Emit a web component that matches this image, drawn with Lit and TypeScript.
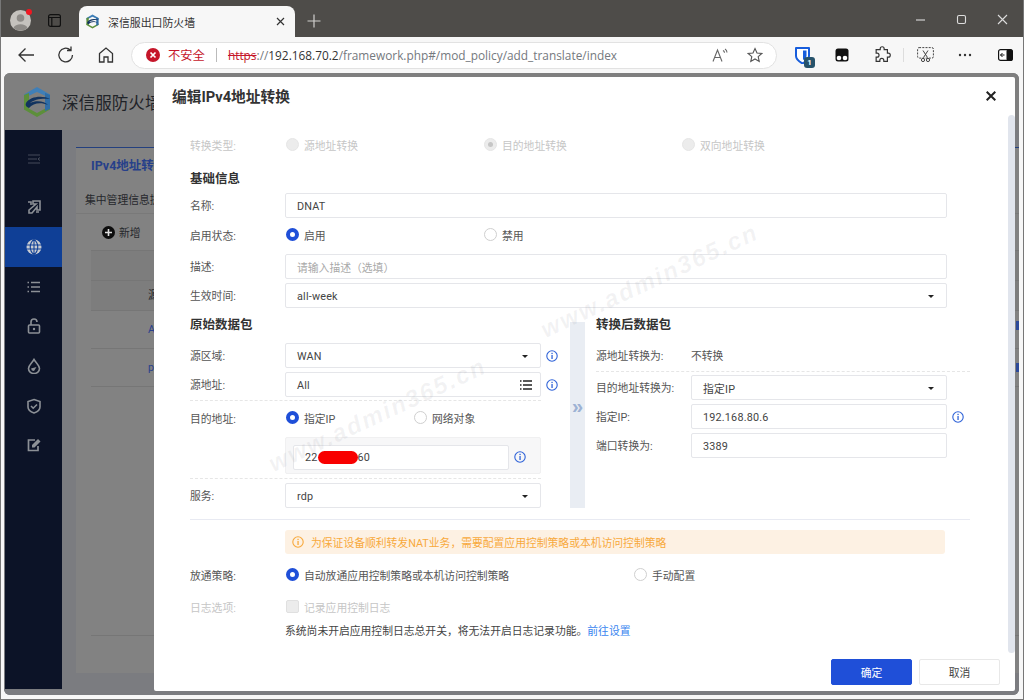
import { LitElement, html, svg, css } from "lit";
import { customElement } from "lit/decorators.js";

const COMMA = "\uFF0C";
const LP = "\uFF08";
const RP = "\uFF09";

const logo = (s: number) => html`<svg width=${s} height=${s} viewBox="0 0 32 32">
  <path d="M16 1 L29 8.500 V12 L16 6 L3 12 V8.500 Z" fill="#3f7fb8"/>
  <path d="M3 20 L16 27 L29 20 V23.500 L16 31 L3 23.500 Z" fill="#5c8f3a"/>
  <path d="M3 9 L8 7 V24 L3 23 Z" fill="#5c8f3a"/>
  <path d="M29 9 L24 7 V25 L29 23 Z" fill="#2f6da6"/>
  <path d="M5 17 C9 10 22 9 29 13 C22 12 13 13 9 17 C15 14 24 15 27 19 C20 16 12 17 8 22 C5 21 4 19 5 17 Z" fill="#12335f"/>
</svg>`;

const info = (c = "#2f63d8") => html`<svg class="info" width="12" height="12" viewBox="0 0 12 12">
  <circle cx="6" cy="6" r="5.200" fill="none" stroke=${c} stroke-width="1.100"/>
  <rect x="5.400" y="5" width="1.300" height="4" fill=${c}/><rect x="5.400" y="2.800" width="1.300" height="1.300" fill=${c}/>
</svg>`;

const tb = (inner: unknown, w = 20, h = 20) => html`<svg width=${w} height=${h} viewBox="0 0 20 20" fill="none" stroke="#333" stroke-width="1.300">${inner}</svg>`;

const sideIcons = [
  svg`<path d="M2 4h12M2 8h9M2 12h12M14 6.500l-2 1.500 2 1.500" stroke-width="1" opacity=".45"/>`,
  svg`<path d="M13 2H7v3h3L3 11v3h3l5-6v3h3V2zM2 3h3v3M10 13h3" stroke-width="1.600"/>`,
  null,
  svg`<path d="M5 3.500h9M5 8h9M5 12.500h9M1.500 3.500h1.500M1.500 8h1.500M1.500 12.500h1.500" stroke-width="1.500"/>`,
  svg`<rect x="2.500" y="7" width="11" height="8" rx="1" stroke-width="1.600"/><path d="M5 7V4a3 3 0 0 1 6 0" stroke-width="1.600"/><circle cx="8" cy="11" r="1.200" fill="#8c9096" stroke="none"/>`,
  svg`<path d="M8 1.500 C10 5 13.500 7 13.500 10.500 A5.500 5 0 0 1 2.500 10.500 C2.500 7 6 5 8 1.500Z" stroke-width="1.600"/><path d="M5 10.500 A3 3 0 0 0 8 13 L10.500 9 Z" fill="#8c9096" stroke="none"/>`,
  svg`<path d="M8 1.500 L14 3.500 V9 C14 12 11 14 8 15 C5 14 2 12 2 9 V3.500 Z" stroke-width="1.600"/><path d="M5 8l2.200 2.200L11 6.500" stroke-width="1.600"/>`,
  svg`<path d="M12 9v4.500H2.500V3H9" stroke-width="1.700"/><path d="M6 10.500V8l6-6 2.500 2.500-6 6z" fill="#8c9096" stroke="none"/>`,
];

@customElement("app-root")
export class AppRoot extends LitElement {
  static styles = css`
    :host { display: block; width: 1024px; height: 700px; overflow: hidden; font-family: Roboto, "Noto Sans CJK SC", sans-serif; font-size: 10.8px; color: #555; }
    .win { height: 700px; box-sizing: border-box; display: flex; flex-direction: column; background: #f7f7f7; border-left: 1px solid #777; border-right: 1px solid #777; border-bottom: 1px solid #777; }

    .tabs { height: 37px; flex: none; background: #4e4c49; display: flex; align-items: flex-end; }
    .avatar { width: 21px; height: 21px; margin: 0 0 6px 9px; position: relative; flex: none; }
    .dot { position: absolute; right: -1px; top: -1px; width: 6px; height: 6px; border-radius: 50%; background: #f01822; }
    .tabact { width: 13px; height: 13px; margin: 0 0 10px 17px; flex: none; display: flex; }
    .tab { width: 216px; height: 31px; margin-left: 18px; flex: none; background: #f7f7f7; border-radius: 8px 8px 0 0; display: flex; align-items: center; box-sizing: border-box; padding: 0 10px 0 6px; color: #333; font-size: 10.9px; }
    .tab .fav { margin-right: 8px; display: flex; }
    .tab .t { flex: 1; }
    .plus { margin: 0 0 9px 12px; display: flex; }
    .spacer { flex: 1; }
    .wc { display: flex; margin-bottom: 12px; padding-right: 15px; gap: 30px; }
    .wc svg { display: block; }

    .tool { height: 36px; flex: none; display: flex; align-items: center; padding-left: 5px; }
    .btn { width: 40px; height: 30px; display: flex; align-items: center; justify-content: center; flex: none; }
    .addr { margin-left: 5px; width: 646px; height: 27px; box-sizing: border-box; background: #fff; border: 1px solid #e2e2e2; border-radius: 14px; display: flex; align-items: center; padding: 0 13px 0 14px; font-size: 11.85px; color: #75797e; flex: none; font-family: "Open Sans", "Noto Sans CJK SC", sans-serif; }
    .addr .err { display: flex; margin-right: 8px; }
    .addr .bad { color: #c5162a; font-size: 12.300px; font-family: "Noto Sans CJK SC", sans-serif; }
    .addr .sep { width: 1px; height: 14px; background: #bbb; margin: 0 11px; }
    .addr s { color: #c5162a; text-decoration-thickness: 1px; }
    .addr b { font-weight: 400; color: #333; }
    .addr .url { flex: 1; white-space: nowrap; }
    .addr .ic { display: flex; margin-left: 19px; }
    .ext { margin-left: 5px; }
    .vsep { width: 1px; height: 14px; background: #ddd; margin: 0 1px; flex: none; }
    .b1 { position: relative; }
    .badge { position: absolute; left: 22px; top: 17px; width: 11px; height: 11px; border-radius: 3px; background: #27536b; color: #fff; font-size: 8px; line-height: 11px; text-align: center; font-weight: 700; }

    .content { flex: 1; padding: 0 4px 4px 3px; display: flex; min-height: 0; }
    .frame { position: relative; flex: 1; background: #7b7c80; border-radius: 6px; overflow: hidden; display: flex; flex-direction: column; }

    .phead { height: 57px; flex: none; background: #7f7f7f; display: flex; align-items: center; padding-left: 17px; gap: 9px; font-size: 16.600px; color: #1f2328; }
    .pbody { flex: 1; display: flex; min-height: 0; padding: 0 0 6px 1px; background: #7b7c80; }
    .side { width: 57px; flex: none; background: #0c1327; box-sizing: border-box; display: flex; flex-direction: column; }
    .si { height: 39.700px; display: flex; align-items: center; justify-content: center; flex: none; }
    .si.top { height: 57px; }
    .si.active { background: #0f3f96; height: 40px; }
    .pmain { flex: 1; padding: 17px 0 0 14px; min-width: 0; display: flex; }
    .panel { flex: 1; background: #828282; border-top: 1px solid #24407f; box-sizing: border-box; height: 526px; color: #26282c; white-space: nowrap; }
    .ptitle { height: 35px; line-height: 35px; padding-left: 15px; font-weight: 700; font-size: 12.500px; color: #27408a; }
    .pinfo { height: 30px; line-height: 36px; padding-left: 9px; border-bottom: 1px solid #797979; }
    .padd { height: 36px; display: flex; align-items: center; padding-left: 26px; gap: 4px; }
    .ptable { margin-left: 15px; border-top: 1px solid #767676; }
    .ptable div { border-bottom: 1px solid #767676; box-sizing: border-box; padding-left: 57px; }
    .r1 { height: 30px; background: #7d7d7d; }
    .r2 { height: 30px; line-height: 30px; background: #7d7d7d; }
    .r3, .r4 { height: 38px; line-height: 38px; color: #29408c; }
    .ptable .gap { height: 249px; }

    .modal { position: absolute; left: 150px; top: 4px; width: 861px; height: 614px; background: #fff; border-radius: 2px; display: flex; flex-direction: column; }
    .mhead { height: 38px; box-sizing: border-box; flex: none; display: flex; align-items: center; justify-content: space-between; padding: 0 19px 2px 18px; font-size: 14.700px; font-weight: 700; color: #333; }
    .close { display: flex; padding-top: 2px; }
    .bar { position: absolute; left: 854px; top: 38px; width: 7px; height: 538px; background: #e1e5ed; border-radius: 4px; }
    .mbody { flex: 1; padding: 18px 0 0 36px; min-height: 0; }
    .row { display: flex; align-items: center; height: 25px; white-space: nowrap; }
    .lbl { width: 95px; flex: none; padding-bottom: 2px; box-sizing: border-box; }
    .sec { height: 20px; line-height: 20px; font-size: 12.500px; font-weight: 700; color: #333; }
    .field { width: 256px; height: 25px; box-sizing: border-box; border: 1px solid #e5e6ea; border-radius: 2px; display: flex; align-items: center; justify-content: space-between; padding: 1px 10px 0 11px; color: #444; flex: none; background: #fff; white-space: nowrap; letter-spacing: 0.2px; }
    .wide { width: 662px; }
    .ph { color: #a9a9a9; letter-spacing: 0; }
    .caret { width: 0; height: 0; border-left: 3px solid transparent; border-right: 3px solid transparent; border-top: 3.500px solid #222; margin-right: 2px; }
    .list { display: flex; margin-right: -2px; }
    .info { margin-left: 5px; flex: none; }
    .radio { display: flex; align-items: center; gap: 6px; flex: none; padding-bottom: 2px; }
    .rc { width: 13px; height: 13px; box-sizing: border-box; border-radius: 50%; border: 1px solid #cfcfcf; background: #fff; flex: none; margin-left: 1px; margin-right: -1px; display: flex; align-items: center; justify-content: center; }
    .rc.on { border: 4px solid #1f4fd8; }
    .rc.off { background: #ececec; border-color: #e6e6e6; }
    .rc.off i { width: 5px; height: 5px; border-radius: 50%; background: #c6c6c6; }
    .dis { color: #c6c6c6; }
    .logtxt { padding-bottom: 2px; }
    .w198 { width: 198px; }
    .w128 { width: 128px; }
    .w348 { width: 348px; }
    .m3 { margin-top: 3px; } .m5 { margin-top: 5px; } .m6 { margin-top: 6px; } .m4 { margin-top: 4px; } .m7 { margin-top: 7px; } .m8 { margin-top: 8px; } .m9 { margin-top: 9px; } .m11 { margin-top: 11px; }

    .cols { display: flex; margin-top: 7px; }
    .left { width: 351px; flex: none; }
    .strip { width: 15px; flex: none; margin: 7px 11px 0 29px; background: #e9edf3; display: flex; align-items: center; justify-content: center; color: #9db2d3; font-size: 20px; font-weight: 700; padding-bottom: 18px; box-sizing: border-box; font-family: "Liberation Sans", sans-serif; }
    .right { width: 374px; flex: none; }
    .rowi { margin-right: -30px; }
    .dash { height: 0; border-top: 1px dashed #e6e6e6; }
    .inner { height: 37px; width: 256px; box-sizing: border-box; margin-left: 95px; background: #f7f7f8; border: 1px solid #f0f0f1; border-radius: 2px; display: flex; align-items: center; padding: 3px 0 0 7px; }
    .inner .field { width: 216px; padding-left: 11px; justify-content: flex-start; }
    .redact { display: inline-block; width: 40px; height: 13px; border-radius: 7px; background: #f80000; flex: none; }
    .hr { width: 780px; height: 1px; background: #e8eaf2; margin-top: 11px; }
    .alert { width: 660px; height: 24px; margin: 10px 0 0 95px; background: #fdf1e3; border-radius: 3px; color: #f8a93c; display: flex; align-items: center; padding-left: 1px; box-sizing: border-box; white-space: nowrap; }
    .alert .info { margin: 0 7px 0 6px; }
    .check { width: 13px; height: 13px; background: #ececec; border: 1px solid #e0e0e0; box-sizing: border-box; border-radius: 2px; margin: 0 5px 2px 1px; flex: none; }
    .note { height: 22px; line-height: 24px; padding-left: 95px; color: #444; white-space: nowrap; }
    .note a { color: #3a86f0; }
    .foot { flex: none; display: flex; justify-content: flex-end; gap: 7px; padding: 0 15px 6px 0; }
    .fb { width: 81px; height: 26px; box-sizing: border-box; display: flex; align-items: center; justify-content: center; border-radius: 2px; border: 1px solid #e8e8e8; color: #444; background: #fff; }
    .fb.pri { background: #1f4fd8; border-color: #1f4fd8; color: #fff; }

    .edge { position: absolute; right: 0; top: 0; bottom: 0; width: 3px; }
    .mark { position: absolute; width: 3px; height: 9px; left: 0; background: #2d4a9a; }
    .wm { position: absolute; font: italic 700 24px "Liberation Sans", sans-serif; color: rgba(120, 125, 135, 0.09); letter-spacing: 2px; transform: rotate(-25deg); transform-origin: left center; white-space: nowrap; pointer-events: none; }
  `;

  private sel(v: string) {
    return html`<div class="field"><span>${v}</span><span class="caret"></span></div>`;
  }

  private chrome() {
    return html`
      <div class="tabs">
        <div class="avatar">
          <svg width="21" height="21" viewBox="0 0 21 21"><circle cx="10.500" cy="10.500" r="10.500" fill="#c5c2bd"/><circle cx="10.500" cy="8" r="3.800" fill="#8e8b87"/><path d="M3.500 18 C5 13 16 13 17.500 18 A10 10 0 0 1 3.500 18Z" fill="#8e8b87"/></svg>
          <span class="dot"></span>
        </div>
        <div class="tabact"><svg width="13" height="13" viewBox="0 0 13 13" fill="none" stroke="#111" stroke-width="1.200"><rect x=".6" y=".6" width="11.800" height="11.800" rx="2"/><path d="M.6 3.500h11.800M3.800 3.500v9" /></svg></div>
        <div class="tab"><span class="fav">${logo(15)}</span><span class="t">深信服出口防火墙</span>
          <svg width="9" height="9" viewBox="0 0 9 9" stroke="#333" stroke-width="1.200"><path d="M1 1l7 7M8 1L1 8"/></svg></div>
        <div class="plus"><svg width="14" height="14" viewBox="0 0 14 14" stroke="#d0cfcd" stroke-width="1.200"><path d="M7 .5v13M.5 7h13"/></svg></div>
        <div class="spacer"></div>
        <div class="wc">
          <svg width="11" height="11" viewBox="0 0 11 11" stroke="#ddd" stroke-width="1.100"><path d="M1 6h9"/></svg>
          <svg width="11" height="11" viewBox="0 0 11 11" stroke="#ddd" stroke-width="1.100" fill="none"><rect x="1.500" y="1.500" width="8" height="8" rx="1.500"/></svg>
          <svg width="11" height="11" viewBox="0 0 11 11" stroke="#ddd" stroke-width="1.100"><path d="M1 1l9 9M10 1l-9 9"/></svg>
        </div>
      </div>
      <div class="tool">
        <div class="btn">${tb(svg`<path d="M18 10H3M9.500 3.500 3 10l6.500 6.500"/>`)}</div>
        <div class="btn">${tb(svg`<path d="M16.500 10a6.800 6.800 0 1 1-2.200-5M15 1.500V5.500h-4"/>`)}</div>
        <div class="btn">${tb(svg`<path d="M3.500 8.500 10 3l6.500 5.500V17h-4.500v-5h-4v5H3.500Z"/>`)}</div>
        <div class="addr">
          <span class="err"><svg width="14" height="14" viewBox="0 0 14 14"><circle cx="7" cy="7" r="7" fill="#c5162a"/><path d="M4.500 4.500l5 5M9.500 4.500l-5 5" stroke="#fff" stroke-width="1.700"/></svg></span>
          <span class="bad">不安全</span><span class="sep"></span>
          <span class="url"><s>https</s>://<b>192.168.70.2</b>/framework.php#/mod_policy/add_translate/index</span>
          <span class="ic"><svg width="16" height="15" viewBox="0 0 16 15" fill="none" stroke="#666" stroke-width="1.100"><path d="M1 13.500 5.500 2l4.500 11.500M2.700 9.500h5.600M11 2.500c1 .5 1.500 1.200 1.500 2.200M13 1c1.400.8 2 2 2 3.500"/></svg></span>
          <span class="ic"><svg width="16" height="16" viewBox="0 0 16 16" fill="none" stroke="#555" stroke-width="1.100"><path d="M8 1.500l2 4.500 4.800.5-3.600 3.200 1 4.800L8 12l-4.200 2.500 1-4.800L1.200 6.500 6 6z"/></svg></span>
        </div>
        <div class="btn ext b1"><svg width="15" height="17" viewBox="0 0 15 17"><path d="M1 1h13v8c0 4-4 6-6.500 7.500C5 15 1 13 1 9z" fill="#fff" stroke="#175ddc" stroke-width="2" stroke-linejoin="round"/><path d="M8 3.500h3.500v5.500c0 2-2 3-3.500 4z" fill="#175ddc"/></svg><span class="badge">1</span></div>
        <div class="btn"><svg width="14" height="14" viewBox="0 0 14 14"><rect x=".5" y=".5" width="13" height="13" rx="2.500" fill="#111"/><circle cx="4" cy="10" r="2.300" fill="#fff"/><circle cx="10" cy="10" r="2.300" fill="#fff"/></svg></div>
        <div class="btn">${tb(svg`<path d="M8 3a2.200 2.200 0 0 1 4.400 0V4H16V8h1a2.200 2.200 0 0 1 0 4.400H16V17H12V16a2.200 2.200 0 0 0-4.400 0v1H3.500V12.400h1a2.200 2.200 0 0 0 0-4.400h-1V4H8Z"/>`, 18, 18)}</div>
        <span class="vsep"></span>
        <div class="btn"><svg width="17" height="16" viewBox="0 0 17 16" fill="none" stroke="#444" stroke-width="1"><rect x=".6" y=".6" width="15.800" height="10.500" rx="1.500" stroke-dasharray="2 1.200"/><path d="M6 3.500l4.500 7M11 3.500l-4.500 7"/><circle cx="6" cy="13" r="1.600"/><circle cx="11" cy="13" r="1.600"/></svg></div>
        <div class="btn"><svg width="14" height="4" viewBox="0 0 14 4" fill="#333"><circle cx="2" cy="2" r="1.200"/><circle cx="7" cy="2" r="1.200"/><circle cx="12" cy="2" r="1.200"/></svg></div>
        <div class="btn"><svg width="15" height="12" viewBox="0 0 15 12"><rect x=".6" y=".6" width="13.800" height="10.800" rx="2" fill="#fff" stroke="#111" stroke-width="1.200"/><rect x="8.500" y=".6" width="6" height="10.800" rx="1.500" fill="#111"/><path d="M6.500 6H2.500M4.500 4 2.500 6l2 2" stroke="#111" fill="none"/></svg></div>
      </div>`;
  }

  private page() {
    return html`
      <div class="phead">${logo(32)}<span>深信服防火墙</span></div>
      <div class="pbody">
        <div class="side">
          ${sideIcons.map((p, i) => html`<div class="si ${i === 0 ? "top" : ""} ${i === 2 ? "active" : ""}">
            ${p === null
              ? html`<svg width="16" height="16" viewBox="0 0 16 16"><circle cx="8" cy="8" r="7.500" fill="#c9ccd2"/><path d="M.5 6h15M.5 10h15M8 .5v15M8 .5C3 4 3 12 8 15.500M8 .500C13 4 13 12 8 15.500" stroke="#0f3f96" stroke-width="1.100" fill="none"/></svg>`
              : html`<svg width="16" height="16" viewBox="0 0 16 16" fill="none" stroke="#8c9096">${p}</svg>`}
          </div>`)}
        </div>
        <div class="pmain">
          <div class="panel">
            <div class="ptitle">IPv4地址转换</div>
            <div class="pinfo">集中管理信息提示</div>
            <div class="padd"><svg width="13" height="13" viewBox="0 0 13 13"><circle cx="6.500" cy="6.500" r="6.500" fill="#0d0d0d"/><path d="M6.500 3v7M3 6.500h7" stroke="#ddd" stroke-width="1.600"/></svg><span>新增</span></div>
            <div class="ptable">
              <div class="r1"></div>
              <div class="r2">源</div>
              <div class="r3">A</div>
              <div class="r4">p</div>
              <div class="gap"></div>
            </div>
          </div>
        </div>
      </div>
      <div class="edge"><span class="mark" style="top:248px"></span><span class="mark" style="top:290px"></span></div>`;
  }

  private modal() {
    return html`<div class="modal">
      <div class="mhead"><span>编辑IPv4地址转换</span>
        <span class="close"><svg width="10" height="10" viewBox="0 0 10 10" stroke="#222" stroke-width="2"><path d="M.7.7l8.600 8.600M9.300.7.700 9.300"/></svg></span></div>
      <div class="mbody">
        <div class="row dis">
          <span class="lbl">转换类型:</span>
          <span class="radio w198"><span class="rc off"></span>源地址转换</span>
          <span class="radio w198"><span class="rc off"><i></i></span>目的地址转换</span>
          <span class="radio"><span class="rc off"></span>双向地址转换</span>
        </div>
        <div class="sec m11">基础信息</div>
        <div class="row m4"><span class="lbl">名称:</span><div class="field wide">DNAT</div></div>
        <div class="row m5"><span class="lbl">启用状态:</span>
          <span class="radio w198"><span class="rc on"></span>启用</span><span class="radio"><span class="rc"></span>禁用</span></div>
        <div class="row m6"><span class="lbl">描述:</span><div class="field wide ph">请输入描述${LP}选填${RP}</div></div>
        <div class="row m4"><span class="lbl">生效时间:</span><div class="field wide"><span>all-week</span><span class="caret"></span></div></div>

        <div class="cols">
          <div class="left">
            <div class="sec">原始数据包</div>
            <div class="row m8 rowi"><span class="lbl">源区域:</span>${this.sel("WAN")}${info()}</div>
            <div class="row m4 rowi"><span class="lbl">源地址:</span>
              <div class="field"><span>All</span><span class="list"><svg width="12" height="10" viewBox="0 0 12 10" stroke="#222" stroke-width="1.400"><path d="M0 1h1.500M3 1h9M0 5h1.500M3 5h9M0 9h1.500M3 9h9"/></svg></span></div>${info()}</div>
            <div class="dash m3"></div>
            <div class="row m5"><span class="lbl">目的地址:</span>
              <span class="radio w128"><span class="rc on"></span>指定IP</span><span class="radio"><span class="rc"></span>网络对象</span></div>
            <div class="inner m6"><div class="field">22<span class="redact"></span>60</div>${info()}</div>
            <div class="dash m4"></div>
            <div class="row m4"><span class="lbl">服务:</span>${this.sel("rdp")}</div>
          </div>
          <div class="strip">»</div>
          <div class="right">
            <div class="sec">转换后数据包</div>
            <div class="row m8"><span class="lbl">源地址转换为:</span><span class="logtxt">不转换</span></div>
            <div class="dash m3"></div>
            <div class="row m3"><span class="lbl">目的地址转换为:</span>${this.sel("指定IP")}</div>
            <div class="row m4"><span class="lbl">指定IP:</span><div class="field">192.168.80.6</div>${info()}</div>
            <div class="row m4"><span class="lbl">端口转换为:</span><div class="field">3389</div></div>
          </div>
        </div>

        <div class="hr"></div>
        <div class="alert">${info("#f8a93c")}为保证设备顺利转发NAT业务${COMMA}需要配置应用控制策略或本机访问控制策略</div>
        <div class="row m9"><span class="lbl">放通策略:</span>
          <span class="radio w348"><span class="rc on"></span>自动放通应用控制策略或本机访问控制策略</span><span class="radio"><span class="rc"></span>手动配置</span></div>
        <div class="row m7 dis"><span class="lbl">日志选项:</span><span class="check"></span><span class="logtxt">记录应用控制日志</span></div>
        <div class="note">系统尚未开启应用控制日志总开关${COMMA}将无法开启日志记录功能。<a>前往设置</a></div>
      </div>
      <div class="foot"><div class="fb pri">确定</div><div class="fb">取消</div></div>
      <div class="bar"></div>
      <span class="wm" style="left:116px;top:374px">www.admin365.cn</span>
      <span class="wm" style="left:388px;top:240px">www.admin365.cn</span>
    </div>`;
  }

  render() {
    return html`<div class="win">
      ${this.chrome()}
      <div class="content"><div class="frame">${this.page()}${this.modal()}</div></div>
    </div>`;
  }
}
